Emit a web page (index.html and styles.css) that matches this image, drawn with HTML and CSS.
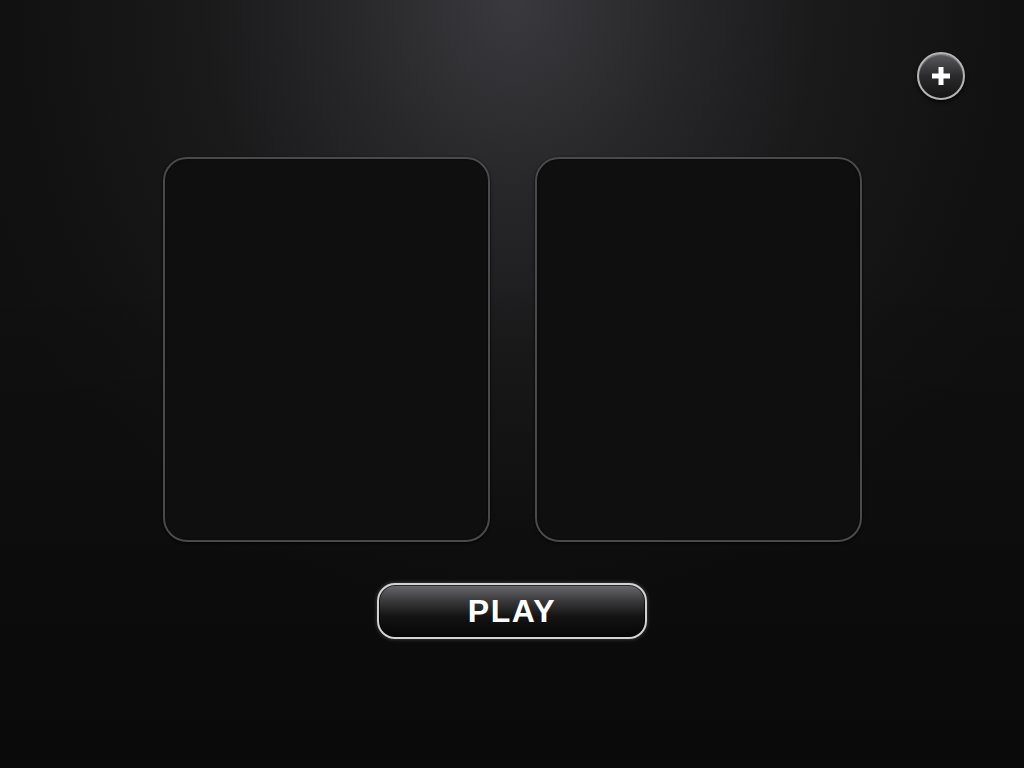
FILE: index.html
```html
<!DOCTYPE html>
<html lang="en">
<head>
    <meta charset="UTF-8">
    <meta name="viewport" content="width=device-width, initial-scale=1.0">
    <title>Play</title>
    <link rel="stylesheet" href="styles.css">
</head>
<body>
<div class="screen">
    <div class="top-bar">
        <button class="add-button" aria-label="Add">
            <svg width="22" height="22" viewBox="0 0 22 22">
                <path d="M11 2 V20 M2 11 H20" stroke="#fff" stroke-width="5" stroke-linecap="butt"/>
            </svg>
        </button>
    </div>
    <div class="panels">
        <div class="panel"></div>
        <div class="panel"></div>
    </div>
    <button class="play-button">PLAY</button>
</div>
</body>
</html>
```
FILE: styles.css
```css
/* General styles */
html, body {
    margin: 0;
    padding: 0;
    height: 100%;
}

body {
    font-family: 'Liberation Sans', Arial, sans-serif;
    background-color: #0c0c0c;
    background-image:
        linear-gradient(rgba(0, 0, 0, 0) 35%, rgba(0, 0, 0, 0.4) 100%),
        radial-gradient(ellipse 560px 640px at 50% 0, #3a3a3e 0%, #27272a 30%, #1a1a1b 55%, #121212 85%, #101010 100%);
    background-repeat: no-repeat;
    overflow: hidden;
}

.screen {
    display: flex;
    flex-direction: column;
    align-items: center;
    height: 100vh;
    padding-top: 52px;
    box-sizing: border-box;
}

/* Top bar with the add button */
.top-bar {
    align-self: stretch;
    display: flex;
    justify-content: flex-end;
    padding-right: 59px;
    height: 48px;
}

.add-button {
    width: 48px;
    height: 48px;
    border-radius: 50%;
    border: 2px solid #b4b4b4;
    background: linear-gradient(#5c5c5e, #2a2a2c 50%, #141414);
    box-shadow: 0 2px 4px rgba(0, 0, 0, 0.8), inset 0 1px 1px rgba(255, 255, 255, 0.3);
    display: flex;
    align-items: center;
    justify-content: center;
    padding: 0;
    box-sizing: border-box;
    cursor: pointer;
}

/* Panels */
.panels {
    display: flex;
    gap: 45px;
    margin-top: 57px;
}

.panel {
    width: 327px;
    height: 385px;
    box-sizing: border-box;
    border: 2px solid #4a4a4c;
    border-radius: 24px;
    background-color: #0f0f0f;
    box-shadow: 0 1px 3px rgba(0, 0, 0, 0.9), inset 0 0 2px rgba(0, 0, 0, 0.8);
}

/* Play button */
.play-button {
    margin-top: 41px;
    width: 270px;
    height: 56px;
    box-sizing: border-box;
    border: 2px solid #d2d2d2;
    border-radius: 18px;
    background: linear-gradient(#6a6a6c, #3a3a3c 30%, #141414 60%, #050505);
    box-shadow: 0 0 4px rgba(255, 255, 255, 0.25), inset 0 0 0 1px rgba(0, 0, 0, 0.6);
    color: #fff;
    font-family: 'Liberation Sans', Arial, sans-serif;
    font-weight: 700;
    font-size: 32px;
    letter-spacing: 1.5px;
    padding: 0;
    cursor: pointer;
}
```
